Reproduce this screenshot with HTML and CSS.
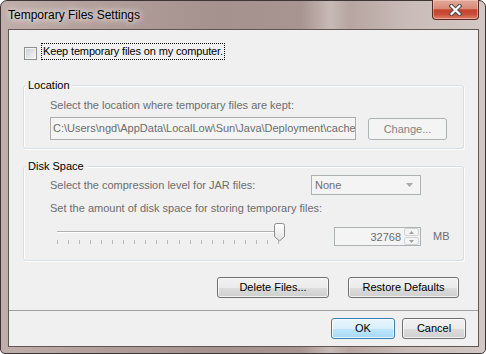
FILE: index.html
```html
<!DOCTYPE html>
<html lang="en">
<head>
  <meta charset="UTF-8">
  <meta name="viewport" content="width=device-width, initial-scale=1.0">
  <title>Temporary Files Settings</title>
  <link rel="stylesheet" href="styles.css">
</head>
<body>
  <div class="window">
    <div class="titlebar">
      <span class="title">Temporary Files Settings</span>
      <span class="close">
        <svg width="13" height="12" viewBox="0 0 13 12">
          <path d="M2.5 2 L10.5 10 M10.5 2 L2.5 10" stroke="#4a4a4a" stroke-width="4.2" stroke-linecap="square"/>
          <path d="M2.5 2 L10.5 10 M10.5 2 L2.5 10" stroke="#fff" stroke-width="2.2" stroke-linecap="square"/>
        </svg>
      </span>
    </div>

    <div class="client">
      <div class="content">
        <label class="check-row">
          <span class="checkbox"></span>
          <span class="focus">Keep temporary files on my computer.</span>
        </label>

        <div class="group">
          <div class="group-title">Location</div>
          <div class="label disabled first">Select the location where temporary files are kept:</div>
          <div class="path-row">
            <div class="field">C:\Users\ngd\AppData\LocalLow\Sun\Java\Deployment\cache</div>
            <div class="btn btn-disabled btn-change">Change...</div>
          </div>
        </div>

        <div class="group group-disk">
          <div class="group-title">Disk Space</div>
          <div class="combo-row">
            <span class="label disabled combo-label">Select the compression level for JAR files:</span>
            <div class="combo">
              <span>None</span>
              <svg width="7" height="4" viewBox="0 0 7 4"><path d="M0 0 H7 L3.5 4 Z" fill="#a8a8a8"/></svg>
            </div>
          </div>
          <div class="label disabled amount-label">Set the amount of disk space for storing temporary files:</div>
          <div class="slider-row">
            <div class="slider">
              <div class="track"></div>
              <div class="ticks">
                <i></i><i></i><i></i><i></i><i></i><i></i><i></i>
                <i></i><i></i><i></i><i></i><i></i><i></i><i></i>
                <i></i><i></i><i></i><i></i><i></i><i></i><i></i>
              </div>
              <svg class="thumb" width="11" height="19" viewBox="0 0 11 19">
                <defs>
                  <linearGradient id="tg" x1="0" y1="0" x2="0" y2="1">
                    <stop offset="0" stop-color="#ffffff"/>
                    <stop offset="1" stop-color="#e2e2e2"/>
                  </linearGradient>
                </defs>
                <path d="M0.5 2.5 Q0.5 0.5 2.5 0.5 H8.5 Q10.5 0.5 10.5 2.5 V13.5 L5.5 18 L0.5 13.5 Z" fill="url(#tg)" stroke="#8c8c8c"/>
              </svg>
            </div>
            <div class="spinner">
              <span class="spin-value">32768</span>
              <div class="spin-buttons">
                <span class="spin-btn"><svg width="5" height="3" viewBox="0 0 5 3"><path d="M0 3 H5 L2.5 0 Z" fill="#a0a0a0"/></svg></span>
                <span class="spin-btn"><svg width="5" height="3" viewBox="0 0 5 3"><path d="M0 0 H5 L2.5 3 Z" fill="#a0a0a0"/></svg></span>
              </div>
            </div>
            <span class="label disabled unit">MB</span>
          </div>
        </div>

        <div class="actions">
          <div class="btn btn-delete">Delete Files...</div>
          <div class="btn btn-restore">Restore Defaults</div>
        </div>
      </div>

      <div class="footer">
        <div class="btn btn-default btn-small">OK</div>
        <div class="btn btn-small">Cancel</div>
      </div>
    </div>
  </div>
</body>
</html>
```

FILE: styles.css
```css
body {
  margin: 0;
  background: #fff;
  font-family: "Liberation Sans", Arial, sans-serif;
  font-size: 11px;
  overflow: hidden;
}

.window {
  box-sizing: border-box;
  width: 486px;
  height: 354px;
  display: flex;
  flex-direction: column;
  border: 1px solid #3e3634;
  border-radius: 7px 7px 5px 5px;
  background: linear-gradient(90deg, #bfaeaa 0%, #b19d99 22%, #a5918d 45%, #a89490 62%, #c7bab6 68%, #b7a5a1 72%, #c9bcb8 84%, #d3c8c5 100%);
}

.titlebar {
  height: 28px;
  display: flex;
  align-items: center;
  padding-left: 7px;
}

.title {
  font-size: 12px;
  color: #000;
  text-shadow: 0 0 6px #fff, 0 0 10px rgba(255, 255, 255, 0.8);
}

.close {
  box-sizing: border-box;
  width: 47px;
  height: 20px;
  margin: -1px 6px 0 auto;
  align-self: flex-start;
  display: flex;
  align-items: center;
  justify-content: center;
  border: 1px solid #5b2a24;
  border-top: none;
  border-radius: 0 0 4px 4px;
  background: linear-gradient(#e2a899 0%, #d98a78 45%, #c4432d 52%, #c84d36 75%, #e2806a 100%);
  box-shadow: inset 0 0 0 1px rgba(255, 220, 210, 0.45);
}

.client {
  box-sizing: border-box;
  height: 318px;
  margin: 0 6px 0 7px;
  display: flex;
  flex-direction: column;
  border: 1px solid #625653;
  background: #f0f0f0;
}

.content {
  padding: 0 14px;
}

.check-row {
  display: flex;
  align-items: flex-start;
  height: 17px;
  margin: 13px 0 0 1px;
  color: #000;
}

.checkbox {
  box-sizing: border-box;
  width: 13px;
  height: 13px;
  margin-top: 4px;
  margin-right: 4px;
  border: 1px solid #8e8f8f;
  background: linear-gradient(135deg, #c9ccd1 0%, #f8f8f8 100%);
  box-shadow: inset 0 0 0 1px #f4f4f4;
}

.focus {
  line-height: 15px;
  padding: 0 1px;
  letter-spacing: -0.15px;
  border: 1px dotted #000;
}

.group {
  margin-top: 25px;
  padding: 0 0 8px 26px;
  border: 1px solid #d5dfe5;
  border-radius: 3px;
  box-shadow: inset 1px 1px 0 #fff, 1px 1px 0 #fff;
}

.group-disk {
  margin-top: 17px;
  padding-bottom: 14px;
}

.group-title {
  width: fit-content;
  margin: -8px 0 0 -24px;
  padding: 0 2px;
  line-height: 15px;
  background: #f0f0f0;
  color: #000;
}

.label {
  line-height: 15px;
}

.disabled {
  color: #6d6d6d;
}

.first {
  margin-top: 5px;
}

.path-row {
  display: flex;
  align-items: flex-end;
  margin-top: 4px;
}

.field {
  box-sizing: border-box;
  width: 306px;
  height: 23px;
  padding-left: 2px;
  line-height: 21px;
  white-space: nowrap;
  overflow: hidden;
  border: 1px solid #adadad;
  background: #f4f4f4;
  color: #6d6d6d;
}

.btn {
  box-sizing: border-box;
  height: 21px;
  line-height: 19px;
  text-align: center;
  color: #000;
  border: 1px solid #707070;
  border-radius: 3px;
  background: linear-gradient(#f2f2f2 0%, #ebebeb 50%, #dddddd 50%, #cfcfcf 100%);
  box-shadow: inset 0 0 0 1px rgba(255, 255, 255, 0.7);
}

.btn-disabled {
  border-color: #adb2b5;
  background: #f4f4f4;
  color: #838383;
  box-shadow: none;
}

.btn-change {
  width: 79px;
  height: 22px;
  line-height: 20px;
  margin-left: 12px;
}

.btn-default {
  border-color: #3c7fb1;
  background: linear-gradient(#eaf6fd 0%, #d9f0fc 50%, #bee6fd 50%, #a7d9f5 100%);
}

.combo-row {
  display: flex;
  align-items: center;
  margin-top: 1px;
}

.combo-label {
  width: 261px;
}

.combo {
  box-sizing: border-box;
  width: 110px;
  height: 20px;
  display: flex;
  align-items: center;
  justify-content: space-between;
  padding: 0 7px 0 3px;
  border: 1px solid #adb2b5;
  background: #f4f4f4;
  color: #6d6d6d;
}

.amount-label {
  margin-top: 6px;
}

.slider-row {
  display: flex;
  align-items: flex-end;
  height: 23px;
  margin-top: 7px;
}

.slider {
  position: relative;
  width: 240px;
  height: 23px;
}

.track {
  margin: 8px 0 0 7px;
  width: 222px;
  height: 1px;
  background: #b0b0b0;
  border-bottom: 1px solid #fff;
}

.ticks {
  display: flex;
  justify-content: space-between;
  width: 222px;
  margin: 7px 0 0 7px;
}

.ticks i {
  width: 1px;
  height: 4px;
  background: #b8b8b8;
}

.thumb {
  position: absolute;
  left: 224px;
  top: 0;
}

.spinner {
  box-sizing: border-box;
  width: 87px;
  height: 19px;
  margin-left: 44px;
  display: flex;
  align-items: center;
  justify-content: flex-end;
  padding-right: 1px;
  border: 1px solid #adb2b5;
  background: #f4f4f4;
  color: #6d6d6d;
}

.spin-value {
  margin-right: 3px;
}

.spin-buttons {
  display: flex;
  flex-direction: column;
  gap: 1px;
}

.spin-btn {
  box-sizing: border-box;
  width: 15px;
  height: 8px;
  display: flex;
  align-items: center;
  justify-content: center;
  border: 1px solid #d2d2d2;
  border-radius: 2px;
  background: #f4f4f4;
}

.unit {
  margin-left: 12px;
  align-self: center;
  margin-top: 4px;
}

.actions {
  display: flex;
  justify-content: flex-end;
  gap: 19px;
  margin: 16px 5px 0 0;
}

.btn-delete {
  width: 112px;
}

.btn-restore {
  width: 111px;
}

.footer {
  margin-top: auto;
  height: 36px;
  box-sizing: border-box;
  display: flex;
  justify-content: flex-end;
  gap: 7px;
  padding: 7px 12px 0 0;
  border-top: 1px solid #a0a0a0;
}

.btn-small {
  width: 64px;
}
```
